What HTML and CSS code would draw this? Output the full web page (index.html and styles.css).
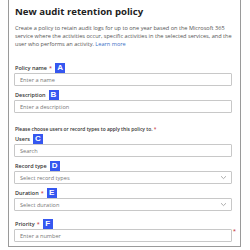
FILE: index.html
```html
<!DOCTYPE html>
<html lang="en">
<head>
    <meta charset="UTF-8">
    <title>New audit retention policy</title>
    <link rel="stylesheet" href="styles.css">
</head>
<body>
    <div class="panel">
        <h2 class="panel-title">New audit retention policy</h2>
        <p class="intro">Create a policy to retain audit logs for up to one year based on the Microsoft 365 service where the activities occur, specific activities in the selected services, and the user who performs an activity. <a href="#">Learn more</a></p>

        <div class="field first">
            <label>Policy name <span class="req">*</span> <span class="tag">A</span></label>
            <div class="input">Enter a name</div>
        </div>

        <div class="field">
            <label>Description <span class="tag">B</span></label>
            <div class="input">Enter a description</div>
        </div>

        <p class="choose">Please choose users or record types to apply this policy to. <span class="req">*</span></p>

        <div class="field tight">
            <label>Users <span class="tag">C</span></label>
            <div class="input">Search</div>
        </div>

        <div class="field">
            <label>Record type <span class="tag">D</span></label>
            <div class="input select">Select record types
                <svg class="chev" width="7" height="5" viewBox="0 0 7 5"><path d="M1 1.2 L3.5 3.6 L6 1.2" fill="none" stroke="#999" stroke-width="0.8"/></svg>
            </div>
        </div>

        <div class="field">
            <label>Duration <span class="req">*</span> <span class="tag">E</span></label>
            <div class="input select">Select duration
                <svg class="chev" width="7" height="5" viewBox="0 0 7 5"><path d="M1 1.2 L3.5 3.6 L6 1.2" fill="none" stroke="#999" stroke-width="0.8"/></svg>
            </div>
        </div>

        <div class="field spaced">
            <label>Priority <span class="req">*</span> <span class="tag">F</span></label>
            <div class="input-row">
                <div class="input">Enter a number</div>
                <span class="req side">*</span>
            </div>
        </div>
    </div>
</body>
</html>
```

FILE: styles.css
```css
body {
    font-family: 'Open Sans', 'Noto Sans', sans-serif;
    margin: 0;
    padding: 0 9px 0 8px;
    background-color: #fff;
    color: #333;
}

.panel {
    border: 1px solid #9a9a9a;
    border-top: none;
    padding: 4px 8px 4px 5px;
}

.panel-title,
.intro,
.choose,
.field label {
    padding-left: 1px;
}

.panel-title {
    font-size: 9.6px;
    font-weight: 700;
    color: #222;
    margin: 1px 0 0 0;
    line-height: 14px;
}

.intro {
    font-size: 5.6px;
    line-height: 8px;
    color: #555;
    margin: 5px 0 0 0;
}

.intro a {
    color: #3b6fc6;
    text-decoration: none;
}

.field {
    margin-top: 3px;
}

.field.first {
    margin-top: 14px;
}

.field.tight {
    margin-top: 0;
}

.field.spaced {
    margin-top: 7px;
}

.field label {
    display: flex;
    align-items: center;
    gap: 2px;
    font-size: 5.5px;
    font-weight: 600;
    color: #333;
    height: 11px;
}

.req {
    color: #c4262e;
    font-weight: 400;
}

.tag {
    display: inline-flex;
    align-items: center;
    justify-content: center;
    width: 10px;
    height: 10px;
    background-color: #3557f0;
    color: #fff;
    font-size: 8px;
    font-weight: 700;
    margin-left: 1px;
    font-family: 'Liberation Sans', sans-serif;
}

.input {
    border: 1px solid #c8c8c8;
    border-radius: 1px;
    height: 13px;
    box-sizing: border-box;
    font-size: 5.6px;
    color: #777;
    padding: 0 4px 0 5px;
    display: flex;
    align-items: center;
    justify-content: space-between;
    flex: 1;
}

.input-row {
    display: flex;
    align-items: flex-start;
}

.req.side {
    font-size: 6px;
    margin: -2px -4px 0 1px;
    line-height: 8px;
}

.choose {
    font-size: 4.9px;
    font-weight: 600;
    color: #333;
    margin: 12px 0 0 0;
    line-height: 8px;
}
```
